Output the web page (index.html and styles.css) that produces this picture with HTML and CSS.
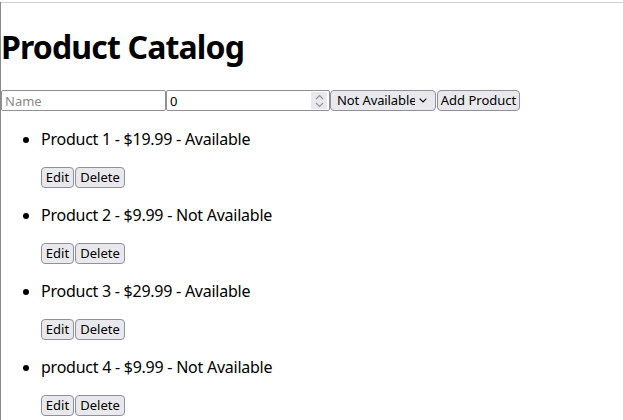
FILE: index.html
```html
<!DOCTYPE html>
<html lang="en">
<head>
<meta charset="utf-8">
<title>Product Catalog</title>
<link rel="stylesheet" href="styles.css">
</head>
<body>
<div class="frame">
  <div class="topline"></div>
  <h1 class="title">Product Catalog</h1>
  <form class="add-row" onsubmit="return false">
    <input class="field name-field" type="text" placeholder="Name">
    <div class="field num-field">
      <input class="num-input" type="text" value="0">
      <span class="spinner">
        <svg width="9" height="14" viewBox="0 0 9 14"><path d="M1 5 L4.5 1.5 L8 5" fill="none" stroke="#8f8f9d" stroke-width="1.1"/><path d="M1 9 L4.5 12.5 L8 9" fill="none" stroke="#8f8f9d" stroke-width="1.1"/></svg>
      </span>
    </div>
    <select class="ctl avail-select">
      <option>Not Available</option>
      <option>Available</option>
    </select>
    <button class="ctl add-btn" type="button">Add Product</button>
  </form>
  <ul class="products">
    <li class="product">
      <div class="product-text">Product 1 - $19.99 - Available</div>
      <div class="actions"><button class="ctl edit-btn" type="button">Edit</button><button class="ctl del-btn" type="button">Delete</button></div>
    </li>
    <li class="product">
      <div class="product-text">Product 2 - $9.99 - Not Available</div>
      <div class="actions"><button class="ctl edit-btn" type="button">Edit</button><button class="ctl del-btn" type="button">Delete</button></div>
    </li>
    <li class="product">
      <div class="product-text">Product 3 - $29.99 - Available</div>
      <div class="actions"><button class="ctl edit-btn" type="button">Edit</button><button class="ctl del-btn" type="button">Delete</button></div>
    </li>
    <li class="product">
      <div class="product-text">product 4 - $9.99 - Not Available</div>
      <div class="actions"><button class="ctl edit-btn" type="button">Edit</button><button class="ctl del-btn" type="button">Delete</button></div>
    </li>
  </ul>
</div>
</body>
</html>
```
FILE: styles.css
```css
html, body {
  margin: 0;
  padding: 0;
  background: #ffffff;
}
body {
  font-family: "Noto Sans", "Open Sans", sans-serif;
  color: #000000;
  overflow: hidden;
}
.frame {
  border-left: 1px solid #8a8a8a;
  min-height: 420px;
  box-sizing: border-box;
}
.topline {
  height: 1px;
  margin-top: 2px;
  background: #d2d2d2;
}
.title {
  font-size: 32px;
  font-weight: 700;
  line-height: 43px;
  letter-spacing: -0.85px;
  margin: 22px 0 22px 0;
}
.add-row {
  display: flex;
  height: 21px;
  margin: 0;
}
.field {
  box-sizing: border-box;
  height: 21px;
  border: 1px solid #8f8f9d;
  border-radius: 2px;
  background: #fff;
  font-family: "Noto Sans", sans-serif;
  font-size: 13px;
  margin: 0;
}
.name-field {
  width: 165px;
  padding: 0 3px;
  outline: none;
}
.name-field::placeholder {
  color: #8a8a8a;
}
.num-field {
  width: 164px;
  display: flex;
  align-items: stretch;
  padding: 1px 2px 1px 0;
}
.num-input {
  flex: 1;
  min-width: 0;
  border: 0;
  padding: 0 3px;
  font-family: "Noto Sans", sans-serif;
  font-size: 13px;
  outline: none;
  background: transparent;
}
.spinner {
  width: 16px;
  background: #e9e9ed;
  display: flex;
  align-items: center;
  justify-content: center;
}
.ctl {
  box-sizing: border-box;
  height: 21px;
  margin: 0;
  border: 1px solid #8f8f9d;
  border-radius: 4px;
  background-color: #e9e9ed;
  font-family: "Noto Sans", sans-serif;
  font-size: 13px;
  color: #000;
  padding: 0 6px;
  line-height: 17px;
}
.avail-select {
  width: 106px;
  -webkit-appearance: none;
  appearance: none;
  padding: 0 20px 0 6px;
  letter-spacing: -0.1px;
  background-image: url("data:image/svg+xml;utf8,<svg xmlns='http://www.w3.org/2000/svg' width='8' height='5' viewBox='0 0 8 5'><path d='M0.7 0.7 L4 4 L7.3 0.7' fill='none' stroke='black' stroke-width='1.1'/></svg>");
  background-repeat: no-repeat;
  background-position: right 8px center;
}
.add-btn {
  width: 83px;
  margin-left: 1px;
  padding: 0;
}
.products {
  margin: 17px 0 16px 0;
  padding-left: 40px;
}
.product {
  font-size: 16px;
  line-height: 21px;
}
.product-text {
  line-height: 21px;
  letter-spacing: -0.25px;
  padding-top: 1px;
  height: 21px;
  box-sizing: border-box;
}
.actions {
  display: flex;
  gap: 1px;
  height: 23px;
  padding-top: 2px;
  box-sizing: border-box;
  margin: 16px 0;
  line-height: 17px;
}
.actions .ctl {
  flex: none;
  padding: 0;
}
.edit-btn {
  width: 33px;
}
.del-btn {
  width: 50px;
}
```
